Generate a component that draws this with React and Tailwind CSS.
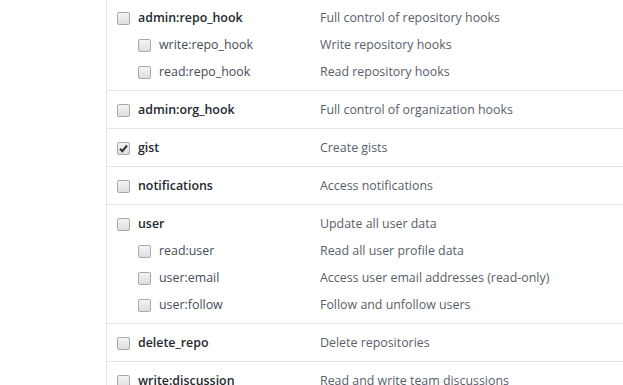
const sections = [
  { rows: [
    { name: "admin:repo_hook", desc: "Full control of repository hooks" },
    { name: "write:repo_hook", desc: "Write repository hooks", sub: true },
    { name: "read:repo_hook", desc: "Read repository hooks", sub: true },
  ], first: true },
  { rows: [{ name: "admin:org_hook", desc: "Full control of organization hooks" }] },
  { rows: [{ name: "gist", desc: "Create gists", checked: true }] },
  { rows: [{ name: "notifications", desc: "Access notifications" }] },
  { rows: [
    { name: "user", desc: "Update all user data" },
    { name: "read:user", desc: "Read all user profile data", sub: true },
    { name: "user:email", desc: "Access user email addresses (read-only)", sub: true },
    { name: "user:follow", desc: "Follow and unfollow users", sub: true },
  ] },
  { rows: [{ name: "delete_repo", desc: "Delete repositories" }] },
  { rows: [{ name: "write:discussion", desc: "Read and write team discussions" }] },
];

function Box({ checked }) {
  return (
    <span className="relative w-[13px] h-[13px] shrink-0 rounded-[2px] border border-[#a9a9a9] bg-gradient-to-b from-[#f4f4f4] to-[#dedede]">
      {checked && (
        <svg viewBox="0 0 13 13" className="absolute left-[-1px] top-[-1px] w-[13px] h-[13px]">
          <path d="M3 6.8 L5.3 9.2 L10 3.5" fill="none" stroke="#333" strokeWidth="2" />
        </svg>
      )}
    </span>
  );
}

function Row({ r, idx }) {
  return (
    <div className={`flex items-center h-5 ${idx > 0 ? "mt-[7px]" : ""}`}>
      <div className={`flex items-center w-[203px] ${r.sub ? "pl-[31px]" : "pl-[10px]"}`}>
        <Box checked={r.checked} />
        <span className={`${r.sub ? "ml-[8px] text-[#444d56] font-normal" : "ml-[8px] text-[#24292e] font-semibold"} whitespace-nowrap`}>
          {r.name}
        </span>
      </div>
      <span className="ml-[10px] text-[#586069] whitespace-nowrap">{r.desc}</span>
    </div>
  );
}

export default function App() {
  return (
    <div className="w-[623px] h-[385px] overflow-hidden bg-white" style={{ fontFamily: '"Open Sans", "Noto Sans", sans-serif' }}>
      <div className="ml-[106px] border-l border-[#e1e4e8] h-full text-[12.4px] leading-5">
        {sections.map((s, i) => (
          <div key={i} className={s.first ? "pt-[8px] pb-[8px]" : "border-t border-[#e1e4e8] pt-[9px] pb-[8px]"}>
            {s.rows.map((r, j) => (
              <Row key={j} r={r} idx={j} />
            ))}
          </div>
        ))}
      </div>
    </div>
  );
}
